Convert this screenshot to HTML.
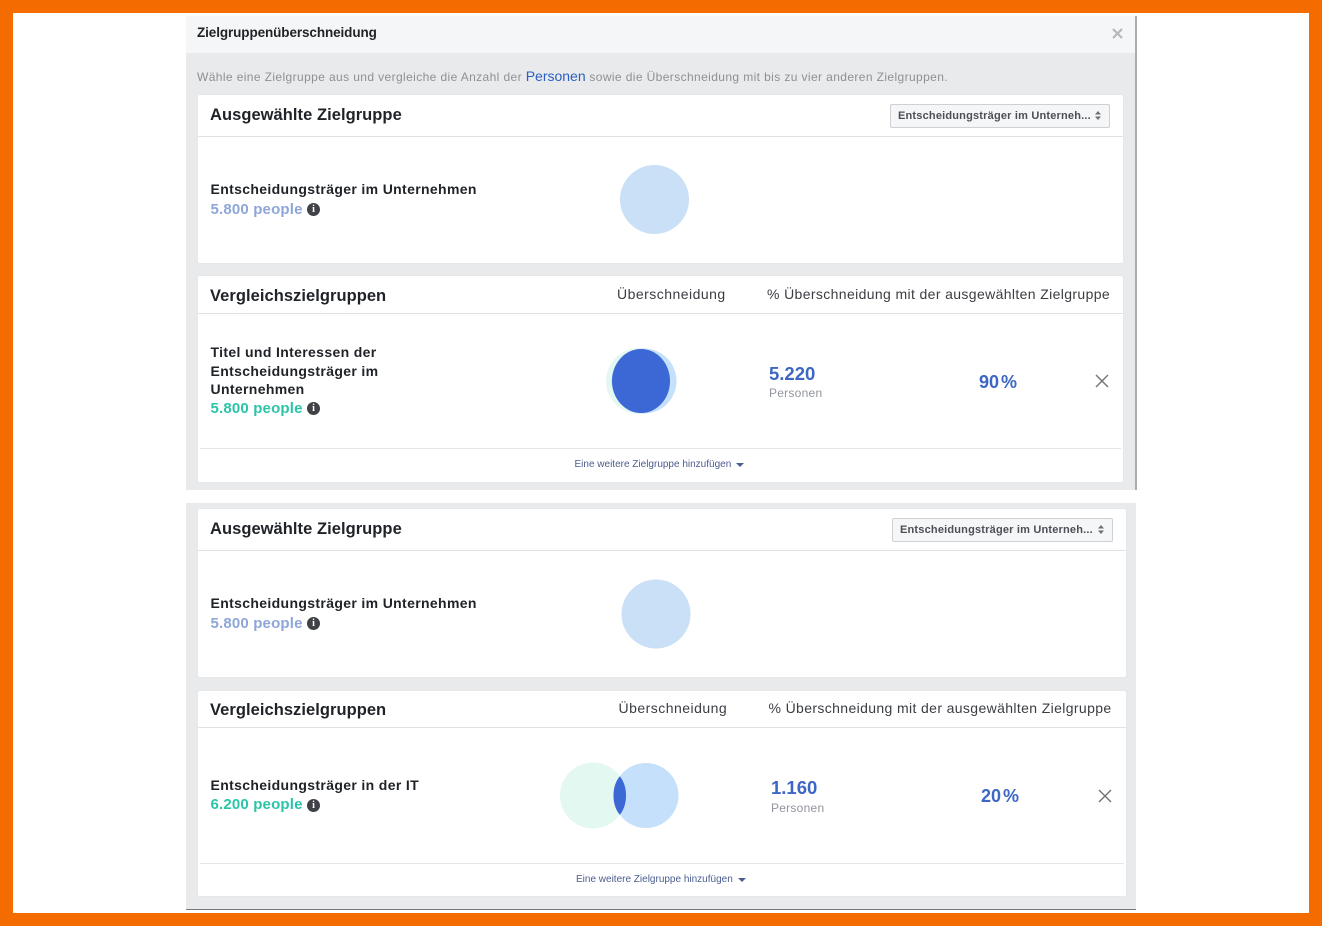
<!DOCTYPE html>
<html><head><meta charset="utf-8"><style>
html,body{margin:0;padding:0}
body{width:1322px;height:926px;overflow:hidden;position:relative;background:#f46b00;font-family:"Liberation Sans",sans-serif;color:#1d2129}
div{position:absolute;white-space:nowrap;box-sizing:border-box}
svg{position:absolute;overflow:visible}
.card{background:#fff;border-radius:2px;box-shadow:0 0 1px #d5d7da}
.line{height:1px;background:#dfe1e4}
.h{font-size:16.5px;font-weight:bold;color:#1f2227;line-height:20px;letter-spacing:.05px}
.n{font-size:14px;font-weight:bold;color:#1f2227;line-height:18.5px;letter-spacing:.35px}
.p{font-size:15px;font-weight:bold;line-height:18px;letter-spacing:.17px}
.c{font-size:14px;color:#3a3d42;line-height:18px;letter-spacing:.48px}
.c2{font-size:14px;color:#3a3d42;line-height:18px;letter-spacing:.37px}
.sel{background:#f5f6f7;border:1px solid #ced0d4;border-radius:2px;font-size:11px;font-weight:bold;color:#4b4f56;line-height:22px;padding-left:7px;letter-spacing:.19px}
.big{font-size:18.5px;font-weight:bold;color:#3d67c4;line-height:22px}
.pct{font-size:18px;font-weight:bold;color:#3d67c4;line-height:22px;word-spacing:-3px}
.per{font-size:12px;color:#90949c;line-height:16px;letter-spacing:.25px}
.add{font-size:10px;color:#4b5d8f;line-height:12px}
.i{width:13px;height:13px;border-radius:50%;background:#3f4246;color:#fff;font:bold 10px/13px "Liberation Serif",serif;text-align:center}
</style></head><body>
<div style="left:13px;top:13px;width:1296px;height:900px;background:#fff"></div>

<!-- panel 1 -->
<div style="left:186px;top:16px;width:951px;height:474px;background:#e9eaeb"></div>
<div style="left:186px;top:16px;width:949px;height:37px;background:#f5f6f7"></div>
<div style="left:1135px;top:16px;width:2px;height:474px;background:#a9abae"></div>
<div style="left:197px;top:24px;font-size:13.5px;font-weight:bold;line-height:18px;color:#1f2227;letter-spacing:-.1px">Zielgruppenüberschneidung</div>
<svg style="left:1112px;top:28px" width="11" height="11"><path d="M1 1L10 10M10 1L1 10" stroke="#b5b7ba" stroke-width="2.2"/></svg>
<div style="left:197px;top:67px;font-size:12px;line-height:18px;color:#8d9095;letter-spacing:.39px">Wähle eine Zielgruppe aus und vergleiche die Anzahl der <span style="color:#2a5fc0;font-size:14px;letter-spacing:0">Personen</span> sowie die Überschneidung mit bis zu vier anderen Zielgruppen.</div>

<div class="card" style="left:198px;top:95px;width:925px;height:168px"></div>
<div class="line" style="left:198px;top:136px;width:925px"></div>
<div class="h" style="left:210px;top:104.500px">Ausgewählte Zielgruppe</div>
<div class="sel" style="left:890px;top:104px;width:220px;height:24px">Entscheidungsträger im Unterneh...</div>
<svg style="left:1095px;top:111px" width="6" height="9"><path d="M3 0L6 3.500H0ZM3 9L0 5.500H6Z" fill="#6b6f76"/></svg>
<div class="n" style="left:210.500px;top:180px">Entscheidungsträger im Unternehmen</div>
<div class="p" style="left:210.500px;top:200.500px;color:#8ea6d8">5.800 people</div>
<div class="i" style="left:307px;top:202.500px">i</div>
<svg style="left:620px;top:165px" width="70" height="70"><circle cx="34.500" cy="34.500" r="34.500" fill="#c9e0f6"/></svg>

<div class="card" style="left:198px;top:276px;width:925px;height:206px"></div>
<div class="line" style="left:198px;top:313px;width:925px"></div>
<div class="h" style="left:210px;top:285.500px">Vergleichszielgruppen</div>
<div class="c" style="left:617px;top:285px">Überschneidung</div>
<div class="c2" style="left:767px;top:285px">% Überschneidung mit der ausgewählten Zielgruppe</div>
<div class="n" style="left:210.500px;top:343px">Titel und Interessen der<br>Entscheidungsträger im<br>Unternehmen</div>
<div class="p" style="left:210.500px;top:399.500px;color:#2bc4a8">5.800 people</div>
<div class="i" style="left:307px;top:402px">i</div>
<svg style="left:600px;top:340px" width="90" height="80">
<circle cx="39" cy="41" r="33" fill="#e4f8f1"/>
<circle cx="44" cy="41" r="32.500" fill="#c5e0fb"/>
<ellipse cx="41" cy="41" rx="29" ry="32" fill="#3b68d4"/>
</svg>
<div class="big" style="left:769px;top:363px">5.220</div>
<div class="per" style="left:769px;top:385px">Personen</div>
<div class="pct" style="left:979px;top:371px">90 %</div>
<svg style="left:1095px;top:374px" width="14" height="14"><path d="M1 1L13 13M13 1L1 13" stroke="#6f7276" stroke-width="1.4"/></svg>
<div class="line" style="left:200px;top:448px;width:921px;background:#e3e5e8"></div>
<div class="add" style="left:574.500px;top:459px">Eine weitere Zielgruppe hinzufügen</div>
<svg style="left:736px;top:463px" width="8" height="4"><path d="M0 0H8L4 4Z" fill="#4b5d8f"/></svg>

<!-- panel 2 -->
<div style="left:186px;top:503px;width:950px;height:407px;background:#e9eaeb"></div>
<div style="left:186px;top:909px;width:950px;height:1px;background:#77797c"></div>
<div class="card" style="left:198px;top:509px;width:928px;height:168px"></div>
<div class="line" style="left:198px;top:550px;width:928px"></div>
<div class="h" style="left:210px;top:518.500px">Ausgewählte Zielgruppe</div>
<div class="sel" style="left:892px;top:518px;width:221px;height:24px">Entscheidungsträger im Unterneh...</div>
<svg style="left:1098px;top:525px" width="6" height="9"><path d="M3 0L6 3.500H0ZM3 9L0 5.500H6Z" fill="#6b6f76"/></svg>
<div class="n" style="left:210.500px;top:594px">Entscheidungsträger im Unternehmen</div>
<div class="p" style="left:210.500px;top:614.500px;color:#8ea6d8">5.800 people</div>
<div class="i" style="left:307px;top:616.500px">i</div>
<svg style="left:621px;top:579px" width="70" height="70"><circle cx="35" cy="35" r="34.500" fill="#c9e0f6"/></svg>

<div class="card" style="left:198px;top:691px;width:928px;height:205px"></div>
<div class="line" style="left:198px;top:727px;width:928px"></div>
<div class="h" style="left:210px;top:699.500px">Vergleichszielgruppen</div>
<div class="c" style="left:618.500px;top:699px">Überschneidung</div>
<div class="c2" style="left:768.500px;top:699px">% Überschneidung mit der ausgewählten Zielgruppe</div>
<div class="n" style="left:210.500px;top:776px">Entscheidungsträger in der IT</div>
<div class="p" style="left:210.500px;top:796px;color:#2bc4a8">6.200 people</div>
<div class="i" style="left:307px;top:798.500px">i</div>
<svg style="left:550px;top:755px" width="140" height="80">
<circle cx="43" cy="40.500" r="33" fill="#e2f8f0"/>
<circle cx="96" cy="40.500" r="32.500" fill="#c5e0fb"/>
<path d="M69.800 21.200C74.500 27 76 34 76 40.500C76 47 74.500 54 69.800 59.800C65 54 63.500 47 63.500 40.500C63.500 34 65 27 69.800 21.200Z" fill="#3b68d4"/>
</svg>
<div class="big" style="left:771px;top:777px">1.160</div>
<div class="per" style="left:771px;top:799.500px">Personen</div>
<div class="pct" style="left:981px;top:785px">20 %</div>
<svg style="left:1098px;top:789px" width="14" height="14"><path d="M1 1L13 13M13 1L1 13" stroke="#6f7276" stroke-width="1.4"/></svg>
<div class="line" style="left:200px;top:863px;width:924px;background:#e3e5e8"></div>
<div class="add" style="left:576px;top:874px">Eine weitere Zielgruppe hinzufügen</div>
<svg style="left:738px;top:877.500px" width="8" height="4"><path d="M0 0H8L4 4Z" fill="#4b5d8f"/></svg>
</body></html>
